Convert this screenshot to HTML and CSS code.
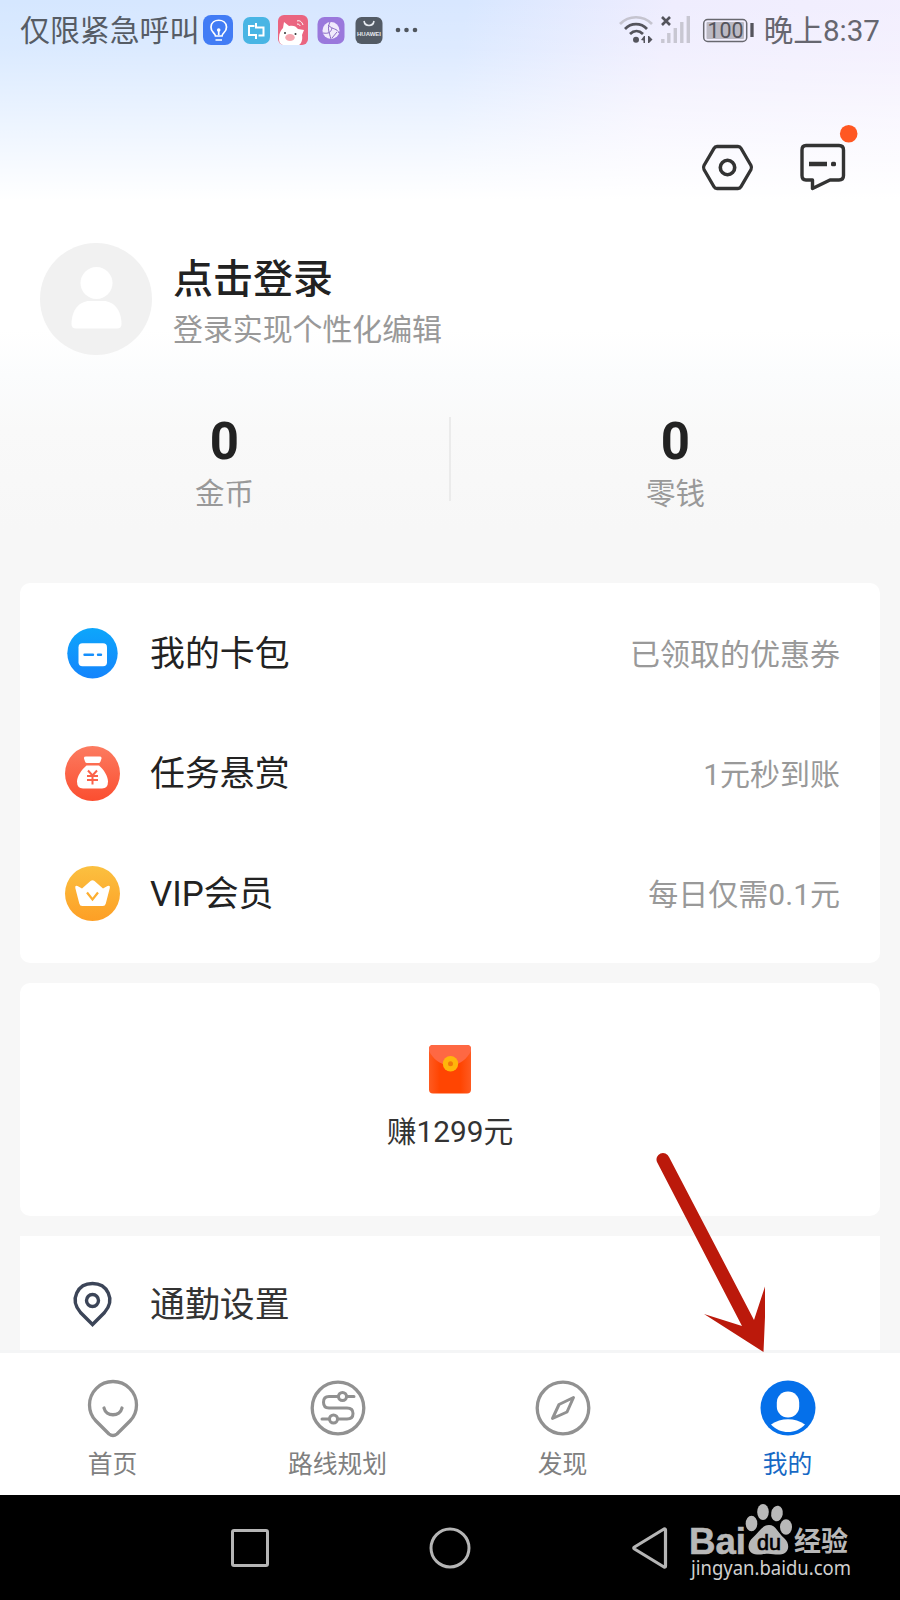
FILE: index.html
```html
<!DOCTYPE html>
<html lang="zh-CN">
<head>
<meta charset="utf-8">
<title>我的</title>
<link rel="stylesheet" href="styles.css">
</head>
<body>
<div class="phone">
  <header class="status">
    <span class="carrier">仅限紧急呼叫</span>
    <svg class="apps" width="220" height="36" viewBox="200 13 220 36">
      <rect x="203" y="15" width="30" height="30" rx="8" fill="#427cf5"/>
      <path d="M215.500 36c0-3-5-4-4.500-9 .5-9 15-9 15.500 0 .3 5-4.500 6-4.500 9zM215.500 40h6.500M218.700 30v5" fill="none" stroke="#fff" stroke-width="1.700"/>
      <circle cx="218.700" cy="30" r="1.800" fill="#fff"/>
      <rect x="243" y="17" width="27" height="27" rx="7" fill="#49b5e4"/>
      <path d="M254.500 26h-5.500v9h7v4M256 23v4.500h7.500v8h-5" fill="none" stroke="#fff" stroke-width="2"/>
      <rect x="278" y="15" width="30" height="30" rx="6" fill="#ea6580"/>
      <path d="M279 38c0-5 2-8 4-10l1-6 5 4c4-1 7 0 9 3l6 1-2 5c1 5-1 9-3 10h-16c-3-1-4-3-4-7z" fill="#fff"/>
      <ellipse cx="290" cy="37.500" rx="4.800" ry="3.500" fill="#f5a6af"/>
      <circle cx="285" cy="33" r="1" fill="#333"/><circle cx="295.500" cy="34" r="1" fill="#333"/>
      <path d="M297 21c3-1 5 1 6 4M297 24c2 0 3 1 3 2" fill="none" stroke="#fff"/>
      <rect x="317.500" y="17" width="27" height="27" rx="7" fill="#9a78dc"/>
      <circle cx="331" cy="30.500" r="8.500" fill="#f0eafc"/>
      <path d="M330 22c-3 6-1 10 1 17M323 33c6 1 8-1 9-5M328 25c5 5 9 3 11 8M332 38l5-6" fill="none" stroke="#8a6bc4"/>
      <rect x="355.500" y="17" width="27" height="27" rx="6" fill="#535b65"/>
      <path d="M364 21c1 6 9 6 10 0" fill="none" stroke="#e5e9ee" stroke-width="1.600"/>
      <text class="hw" x="357" y="35.500" textLength="24" lengthAdjust="spacingAndGlyphs">HUAWEI</text>
      <g fill="#50565e"><circle cx="398" cy="30" r="2.300"/><circle cx="406.500" cy="30" r="2.300"/><circle cx="415" cy="30" r="2.300"/></g>
    </svg>
    <svg class="signals" width="140" height="36" viewBox="617 13 140 36">
      <g fill="none" stroke-width="2.700">
        <path d="M620 24c9-9 23-9 32 0" stroke="#c5c4cf"/>
        <path d="M625 29c6-6.500 16-6.500 22 0M630 34c4-4 9-4 13 0" stroke="#54545c"/>
      </g>
      <circle cx="636" cy="39.800" r="3" fill="#54545c"/>
      <path d="M645 36v7h-1.500v-2.500l-2.500-.5 3-4zM648 36v7h1l3.500-3.500-3.500-3.500z" fill="#54545c"/>
      <path d="M662 17l8 8m0-8l-8 8" stroke="#54545c" stroke-width="2.600"/>
      <path d="M662.800 39v4M668.800 33v10M675.300 28v15M681.800 22v21M688.300 16v27" stroke="#c8c7d2" stroke-width="3.400"/>
      <rect x="703.700" y="19.500" width="43" height="22" rx="4" fill="none" stroke="#68686f" stroke-width="1.500"/>
      <rect x="706.500" y="22" width="37.500" height="17" rx="1" fill="#bbb9c3"/>
      <path d="M752 23v14" stroke="#54545c" stroke-width="3.300"/>
      <text class="level" x="707.500" y="38" textLength="36" lengthAdjust="spacingAndGlyphs">100</text>
    </svg>
    <span class="clock">晚上8:37</span>
  </header>

  <div class="tools">
    <svg width="54" height="50" viewBox="700 142 54 50" fill="none" stroke="#333" stroke-width="3.300">
      <path d="M717 146.500h21q2 0 3 1.800l10 17.200q1 2 0 4l-10 17.200q-1 1.800-3 1.800h-21q-2 0-3-1.800l-10-17.200q-1-2 0-4l10-17.200q1-1.800 3-1.800z"/>
      <circle cx="727.500" cy="167.500" r="7.200" stroke-width="3.600"/>
    </svg>
    <svg class="chat" width="60" height="68" viewBox="798 124 60 68">
      <path d="M806 145.500h33q4.500 0 4.500 4.500v25.500q0 4.500-4.500 4.500h-9l-17.500 8.500v-8.500h-6.500q-4 0-4-4.500v-25.500q0-4.500 4-4.500z" fill="none" stroke="#333" stroke-width="3.400" stroke-linejoin="round"/>
      <path d="M809 164h18" stroke="#333" stroke-width="4.500"/>
      <rect x="831" y="161.700" width="5" height="4.600" rx="1.500" fill="#333"/>
      <circle cx="848.700" cy="133.700" r="8.800" fill="#ff5722"/>
    </svg>
  </div>

  <section class="profile">
    <svg width="112" height="112" viewBox="0 0 112 112">
      <circle cx="56" cy="56" r="56" fill="#f1f1f1"/>
      <circle cx="56.500" cy="40" r="16" fill="#fff"/>
      <path d="M31.500 81c0-14 8-23 18-23h14c10 0 18 9 18 23q0 4.500-4.500 4.500h-41q-4.500 0-4.500-4.500z" fill="#fff"/>
    </svg>
    <div class="who">
      <div class="name">点击登录</div>
      <div class="hint">登录实现个性化编辑</div>
    </div>
  </section>

  <section class="stats">
    <div class="stat"><b>0</b><span>金币</span></div>
    <div class="stat"><b>0</b><span>零钱</span></div>
  </section>

  <main class="cards">
    <section class="card list">
      <div class="row">
        <svg class="ico" width="56" height="56" viewBox="-28 -28 56 56">
          <defs><linearGradient id="gb" x2="0" y2="1"><stop stop-color="#0da6fb"/><stop offset="1" stop-color="#1484fc"/></linearGradient></defs>
          <circle cx=".5" cy=".3" r="25.200" fill="url(#gb)"/><rect x="-13.500" y="-9.700" width="28.500" height="23" rx="4" fill="#fff"/>
          <path d="M-7.500 1.700h8.500M6 1.700h3" stroke="#158ffc" stroke-width="2.400" stroke-linecap="round"/>
        </svg>
        <span class="label">我的卡包</span><span class="note">已领取的优惠券</span>
      </div>
      <div class="row">
        <svg class="ico" width="56" height="56" viewBox="-28.500 -28.500 56 56">
          <defs><linearGradient id="gr" x2="0" y2="1"><stop stop-color="#fc7b60"/><stop offset="1" stop-color="#fb4e30"/></linearGradient></defs>
          <circle r="27.500" fill="url(#gr)"/>
          <path d="M-6.500-17h13.500q2.500 0 2 2l-1 3q-.5 1.500-2 1.500h-11.500q-1.500 0-2-1.500l-1-3q-.5-2 2-2zM-6-8h12.500c5 4 9 11 9 16q0 7-6 7h-19q-6 0-6-7c0-5 4.500-12 9.500-16z" fill="#fff"/>
          <path d="M-4.500-3L0 2l4.500-5M0 2v9M-5.500 2.500h11M-5.500 6.500h11" fill="none" stroke="#fb6249" stroke-width="2"/>
        </svg>
        <span class="label">任务悬赏</span><span class="note">1元秒到账</span>
      </div>
      <div class="row">
        <svg class="ico" width="56" height="56" viewBox="-28.500 -28.500 56 56">
          <defs><linearGradient id="gy" x2="0" y2="1"><stop stop-color="#fbc040"/><stop offset="1" stop-color="#fd9f25"/></linearGradient></defs>
          <circle r="27.500" fill="url(#gy)"/>
          <path d="M-15-7.500l4.500 2.500 8.500-7.500q2-1.500 4 0l8.500 7.500 4.500-2.500q3-1 2.300 2l-4 15.500q-.6 2.500-3 2.500h-20.500q-2.500 0-3-2.500l-4-15.500q-.5-3 2.200-2z" fill="#fff"/>
          <path d="M-5.500-1L0 6l5.500-7" fill="none" stroke="#fdae30" stroke-width="2.200"/>
        </svg>
        <span class="label">VIP会员</span><span class="note">每日仅需0.1元</span>
      </div>
    </section>

    <section class="card earn">
      <svg width="42" height="50" viewBox="0 0 42 50">
        <defs><linearGradient id="ge" x2="1" y2="0"><stop stop-color="#fe5a20"/><stop offset=".25" stop-color="#ff4502"/><stop offset=".75" stop-color="#ff4502"/><stop offset="1" stop-color="#fe5a20"/></linearGradient></defs>
        <rect y="1" width="42" height="48.500" rx="4" fill="url(#ge)"/>
        <path d="M4 1h34q4 0 4 4v2c-4 8-11 14-21 14s-17-6-21-14v-2q0-4 4-4z" fill="#fe6843"/>
        <circle cx="21.500" cy="19.700" r="7.700" fill="#ffb60b"/><circle cx="21.500" cy="19.700" r="2.500" fill="#f17a0b"/>
      </svg>
      <span>赚1299元</span>
    </section>

    <section class="card commute">
      <div class="row">
        <svg class="ico" width="56" height="56" viewBox="-28 -28 56 56" fill="none" stroke="#3c4558" stroke-width="3.400">
          <path d="M.5 20.500L-11.500 8.500C-23-5-14-20.500.5-20.500S24-5 12.500 8.500z"/><circle cx=".5" cy="-3.500" r="6"/>
        </svg>
        <span class="label">通勤设置</span>
      </div>
    </section>
  </main>

  <nav class="tabs">
    <div class="tab">
      <svg width="60" height="64" viewBox="-30 -30 60 64" fill="none" stroke="#919191" stroke-width="3.300" stroke-linecap="round">
        <path d="M-4 26L-17 13C-22 8-23.500 3-23.500-3a23.500 23.500 0 0 1 47 0C23.500 3 22 8 17 13L4 26Q0 29-4 26z"/><path d="M-9 0c2 9 16 9 18 0"/>
      </svg><span>首页</span>
    </div>
    <div class="tab">
      <svg width="60" height="64" viewBox="-30 -30 60 64" fill="none" stroke="#919191" stroke-width="3">
        <circle r="25.800" stroke-width="3.300"/>
        <path d="M16-11.500H9M0-11.500h-9q-5.500 0-5.500 5.700T-9 0h18q6 0 6 5.500t-6 5.500H0M-9 11h-7" stroke-linecap="round"/>
        <circle cx="4.500" cy="-11.500" r="4"/><circle cx="-4.500" cy="11" r="4"/>
      </svg><span>路线规划</span>
    </div>
    <div class="tab">
      <svg width="60" height="64" viewBox="-30 -30 60 64" fill="none" stroke="#919191" stroke-width="3" stroke-linejoin="round">
        <circle r="25.800" stroke-width="3.300"/><path d="M10.500-10.500L-4-3.500-10.500 10.500 4 4z"/>
      </svg><span>发现</span>
    </div>
    <div class="tab active">
      <svg width="60" height="64" viewBox="-30 -30 60 64">
        <circle r="27.500" fill="#0570ea"/><rect x="-11.200" y="-16.500" width="22.400" height="26" rx="11" fill="#fff"/>
        <path d="M-17 16.500c10-7 24-7 34 0-9 10-25 10-34 0z" fill="#fff"/>
      </svg><span>我的</span>
    </div>
  </nav>

  <footer class="sysnav">
    <svg width="44" height="44" viewBox="-22 -22 44 44" fill="none" stroke="#b5b5b5" stroke-width="3"><rect x="-17.500" y="-17.500" width="35" height="35" rx="1.500"/></svg>
    <svg width="44" height="44" viewBox="-22 -22 44 44" fill="none" stroke="#b5b5b5" stroke-width="3"><circle r="19"/></svg>
    <svg width="44" height="44" viewBox="-22 -22 44 44" fill="none" stroke="#b5b5b5" stroke-width="3.200" stroke-linejoin="round"><path d="M15.500-18v36q0 1.500-1.500 1L-15.500 1q-1.500-1 0-2L14-19q1.500-.5 1.500 1z"/></svg>
  </footer>

  <svg class="arrow" width="110" height="204" viewBox="655 1150 110 204">
    <path d="M657 1162a6.500 6.500 0 0 1 12-5L754 1320l12.500-38-3 70-59.500-38 38 12z" fill="#bb190b"/>
  </svg>

  <svg class="mark" width="180" height="94" viewBox="686 1500 180 94" fill="#b8b8b8">
    <text class="bai" x="689" y="1553.500" textLength="57" lengthAdjust="spacingAndGlyphs">Bai</text>
    <ellipse cx="751.500" cy="1523.500" rx="5.800" ry="7.800"/><ellipse cx="763" cy="1512" rx="5.800" ry="8"/>
    <ellipse cx="777" cy="1513.500" rx="5.800" ry="7.800" transform="rotate(10 777 1513.500)"/><ellipse cx="786" cy="1527" rx="6" ry="7.800"/>
    <path d="M769 1525c7 0 9 8 15 13 7 6 5 16-4 16.500-5 .3-7-.8-12-.8s-7 1-11 .8c-10-.5-11-11-4-17 6-5 9-12.500 16-12.500z"/>
    <text class="du" x="757" y="1549.500" textLength="24" lengthAdjust="spacingAndGlyphs">du</text>
    <text class="jy" x="794" y="1551" textLength="54">经验</text>
    <text class="url" x="691" y="1575" textLength="160" lengthAdjust="spacingAndGlyphs">jingyan.baidu.com</text>
  </svg>
</div>
</body>
</html>
```

FILE: styles.css
```css
* { box-sizing: border-box; }
body {
  margin: 0;
  font-family: Roboto, "Noto Sans CJK SC", sans-serif;
  color: #222;
}
svg { display: block; flex: none; }
.phone {
  position: relative;
  display: flex;
  flex-direction: column;
  width: 900px;
  height: 1600px;
  overflow: hidden;
  background:
    linear-gradient(180deg, rgba(255,255,255,0) 0, rgba(255,255,255,.15) 50px, #fff 200px, rgba(255,255,255,0) 201px) no-repeat 0 0 / 900px 201px,
    linear-gradient(100deg, #d5e7ff 0, #d8e7ff 50%, #efedfe 72%, #f3effe 100%) no-repeat 0 0 / 900px 200px,
    linear-gradient(180deg, #fff 200px, #fff 330px, #fbfcfd 375px, #f9f9f9 430px, #f7f7f7 530px);
}
.status {
  display: flex;
  align-items: center;
  height: 62px;
  padding: 0 20px;
  color: #565c65;
  font-size: 29.6px;
  line-height: 36px;
  white-space: nowrap;
}
.carrier { width: 180px; font-size: 29.9px; }
.signals { margin-left: 197px; }
.clock { margin-left: 7px; color: #66666f; }
.hw { font: 700 6px "Liberation Sans", sans-serif; fill: #e5e9ee; }
.level { font-size: 22px; fill: #54545c; }
.tools {
  display: flex;
  align-items: flex-end;
  justify-content: flex-end;
  gap: 44px;
  height: 130px;
  padding-right: 42px;
}
.profile {
  display: flex;
  gap: 21px;
  margin-top: 51px;
  padding-left: 40px;
}
.who { padding-top: 12px; }
.name { font-size: 40px; line-height: 50px; font-weight: 500; }
.hint { padding-top: 7px; font-size: 29.9px; line-height: 36px; color: #999; }
.stats { display: flex; height: 84px; margin-top: 62px; }
.stat {
  display: flex;
  flex: 1;
  flex-direction: column;
  align-items: center;
}
.stat + .stat { border-left: 2px solid #ebebeb; }
.stat b { flex: none; height: 59px; font-size: 51px; line-height: 50px; }
.stat span { flex: none; font-size: 29.5px; line-height: 36px; color: #999; }
.cards {
  display: flex;
  flex-direction: column;
  gap: 20px;
  height: 767px;
  margin-top: 82px;
  padding: 0 20px;
  overflow: hidden;
}
.card { flex: none; background: #fff; border-radius: 10px; }
.list { height: 380px; padding: 10px 0; }
.row {
  display: flex;
  align-items: center;
  height: 120px;
  padding: 0 40px 0 44px;
}
.label { margin-left: 30px; padding-top: 4px; font-size: 34.9px; line-height: 44px; }
.note { margin-left: auto; padding-top: 4px; font-size: 30px; line-height: 40px; color: #999; }
.earn {
  display: flex;
  flex-direction: column;
  align-items: center;
  height: 233px;
  padding-top: 61px;
  gap: 18px;
  font-size: 29.8px;
  line-height: 40px;
  color: #333;
}
.commute { height: 130px; padding-top: 8px; border-radius: 0; }
.commute .label { padding-top: 3px; color: #333; }
.tabs {
  display: flex;
  height: 145px;
  padding-top: 25px;
  background: #fff;
  border-top: 3px solid #f4f5f6;
}
.tab {
  display: flex;
  flex: 1;
  flex-direction: column;
  align-items: center;
  font-size: 24.8px;
  line-height: 36px;
  color: #808080;
}
.tab span { margin-top: 5px; }
.tab.active { color: #1769c5; }
.sysnav {
  display: flex;
  flex: 1;
  gap: 156px;
  align-items: center;
  padding-left: 228px;
  background: #000;
}
.arrow { position: absolute; left: 655px; top: 1150px; }
.mark { position: absolute; left: 686px; top: 1500px; }
.bai { font: 700 36px "Liberation Sans", sans-serif; stroke: #b8b8b8; stroke-width: .6px; }
.du { font: 22px "Liberation Sans", sans-serif; fill: #000; stroke: #000; stroke-width: .7px; }
.jy { font: 700 27px "Noto Sans CJK SC", sans-serif; }
.url { font: 20px "Noto Sans", sans-serif; fill: #d0d0d0; }
```
